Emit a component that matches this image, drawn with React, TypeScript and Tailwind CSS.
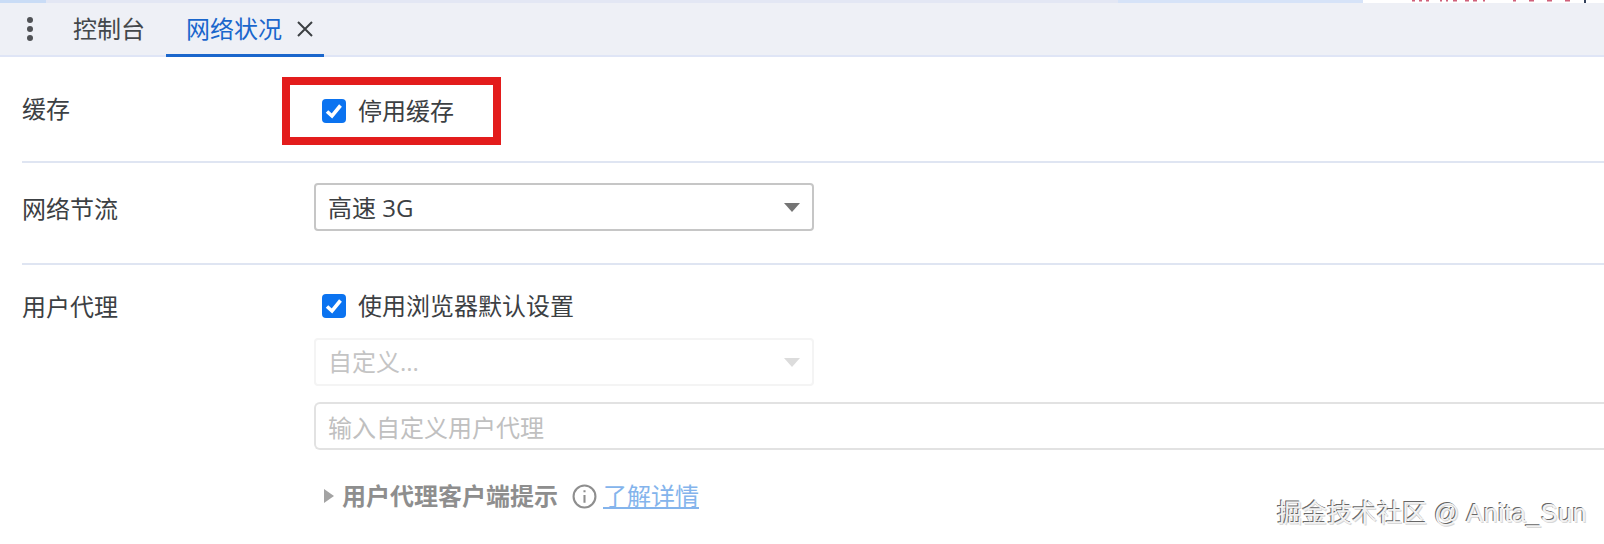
import React from 'react';

const FONT = "font-['Open_Sans','Noto_Sans_CJK_SC',sans-serif]";

const CheckBox: React.FC = () => (
  <span className="flex size-[24px] shrink-0 items-center justify-center rounded-[4px] bg-[#0b73f0]">
    <svg viewBox="0 0 24 24" className="size-[24px]" fill="none" stroke="#ffffff" strokeWidth="3.6">
      <path d="M5 12.5 L10 17 L18.5 6.5" />
    </svg>
  </span>
);

const Caret: React.FC<{ muted?: boolean }> = ({ muted }) => (
  <svg viewBox="0 0 16 9" className="h-[9px] w-[16px]">
    <path d="M0 0 H16 L8 9 Z" fill={muted ? '#dcdcdc' : '#757575'} />
  </svg>
);

const Row: React.FC<{ label: string; className: string; children: React.ReactNode }> = ({ label, className, children }) => (
  <div className={`ml-[22px] flex border-b-2 border-[#dfe5f2] ${className}`}>
    <div className="w-[292px] shrink-0 text-[#3c4043]">{label}</div>
    <div className="flex-1">{children}</div>
  </div>
);

export default function App() {
  return (
    <div className={`relative h-[544px] w-[1604px] overflow-hidden bg-white text-[24px] leading-[30px] ${FONT}`}>
      {/* sliver of the page above the devtools panel */}
      <div className="flex h-[3px] bg-[#e3e7f4]">
        <div className="w-[46px] bg-[#c9dcf6]" />
        <div className="w-[1072px]" />
        <div className="w-[245px] bg-[#d6e3f8]" />
        <div className="flex-1 bg-white">
          <svg viewBox="0 0 241 3" className="h-[3px] w-[241px]" fill="#d0607a">
            <rect x="49" y="0" width="3" height="1.5" />
            <rect x="56" y="0" width="3" height="1.5" />
            <rect x="63" y="0" width="3" height="1.5" />
            <rect x="77" y="0" width="2" height="1.5" />
            <rect x="83" y="0" width="2" height="1.5" />
            <rect x="90" y="0" width="4" height="1.5" />
            <rect x="102" y="0" width="4" height="1.5" />
            <rect x="110" y="0" width="4" height="1.5" />
            <rect x="120" y="0" width="2" height="1.5" />
            <rect x="150" y="0" width="3" height="1.5" />
            <rect x="166" y="0" width="5" height="1.5" />
            <rect x="184" y="0" width="5" height="1.5" />
            <rect x="202" y="0" width="5" height="1.5" />
            <rect x="221" y="0" width="2" height="3" fill="#33415c" />
          </svg>
        </div>
      </div>
      <div className="flex h-[54px] items-stretch border-b-2 border-[#dfe5f6] bg-[#eef0f6]">
        <div className="flex w-[60px] items-center justify-center pb-[1px]">
          <svg viewBox="0 0 8 26" className="h-[26px] w-[8px]" fill="#505256">
            <circle cx="4" cy="4" r="3" />
            <circle cx="4" cy="13" r="3" />
            <circle cx="4" cy="22" r="3" />
          </svg>
        </div>
        <div className="flex w-[106px] items-center pl-[13px] text-[#43474b]">控制台</div>
        <div className="relative flex w-[158px] items-center pl-[20px] text-[#1a66cc]">
          <span>网络状况</span>
          <svg viewBox="0 0 16 16" className="ml-[15px] size-[16px]" fill="none" stroke="#3c4043" strokeWidth="2">
            <path d="M1 1 L15 15 M15 1 L1 15" />
          </svg>
          <span className="absolute right-0 -bottom-[2px] left-0 h-[3px] bg-[#1a66cc]" />
        </div>
      </div>

      <Row label="缓存" className="h-[106px] pt-[37px]">
        <div className="mt-[2px] flex items-center gap-[12px] pl-[8px]">
          <CheckBox />
          <span className="text-[#3c4043]">停用缓存</span>
        </div>
      </Row>

      <Row label="网络节流" className="h-[102px] pt-[31px]">
        <div className="-mt-[11px] flex h-[48px] w-[500px] items-center justify-between rounded-[4px] border-2 border-[#c6c6c6] pr-[12px] pl-[12px] text-[#3c4043]">
          <span className="pt-[2px]">高速 3G</span>
          <Caret />
        </div>
      </Row>

      <div className="ml-[22px] flex">
        <div className="w-[292px] shrink-0 pt-[27px] text-[#3c4043]">用户代理</div>
        <div className="flex-1 pt-[26px]">
          <div className="flex items-center gap-[12px] pl-[8px]">
            <CheckBox />
            <span className="text-[#3c4043]">使用浏览器默认设置</span>
          </div>
          <div className="mt-[17px] flex h-[48px] w-[500px] items-center justify-between rounded-[4px] border-2 border-[#f4f4f4] pr-[12px] pl-[12px] text-[#c4c4c4]">
            <span>自定义...</span>
            <Caret muted />
          </div>
          <div className="mt-[16px] flex h-[48px] items-center rounded-l-[6px] border-y-2 border-l-2 border-[#e2e2e2] pl-[12px] text-[#c0c0c0]">
            <span className="pt-[4px]">输入自定义用户代理</span>
          </div>
          <div className="mt-[31px] flex items-center pl-[10px]">
            <svg viewBox="0 0 10 14" className="mr-[8px] h-[14px] w-[10px]">
              <path d="M0 0 L10 7 L0 14 Z" fill="#a3a3a3" />
            </svg>
            <span className="font-bold text-[#8e8e8e]">用户代理客户端提示</span>
            <svg viewBox="0 0 24 24" className="ml-[14px] size-[25px]" fill="none" stroke="#8e8e8e" strokeWidth="2">
              <circle cx="12" cy="12" r="10.5" />
              <path d="M12 10.5 V18 M12 6 V8" />
            </svg>
            <a className="ml-[6px] text-[#84b4ec] underline">了解详情</a>
          </div>
        </div>
      </div>

      {/* annotation drawn over the screenshot */}
      <div className="absolute top-[77px] left-[282px] h-[68px] w-[219px] border-[8px] border-[#e31c1c]" />

      <div className="absolute top-[498px] left-[1277px] font-['Liberation_Sans','Noto_Sans_CJK_SC',sans-serif] text-[25px] whitespace-nowrap text-[#f2f2f2] [text-shadow:-1px_-1px_0_#666,1px_1px_0_#d8d8d8]">
        掘金技术社区 @ <span className="tracking-[0.6px]">Anita_Sun</span>
      </div>
    </div>
  );
}
